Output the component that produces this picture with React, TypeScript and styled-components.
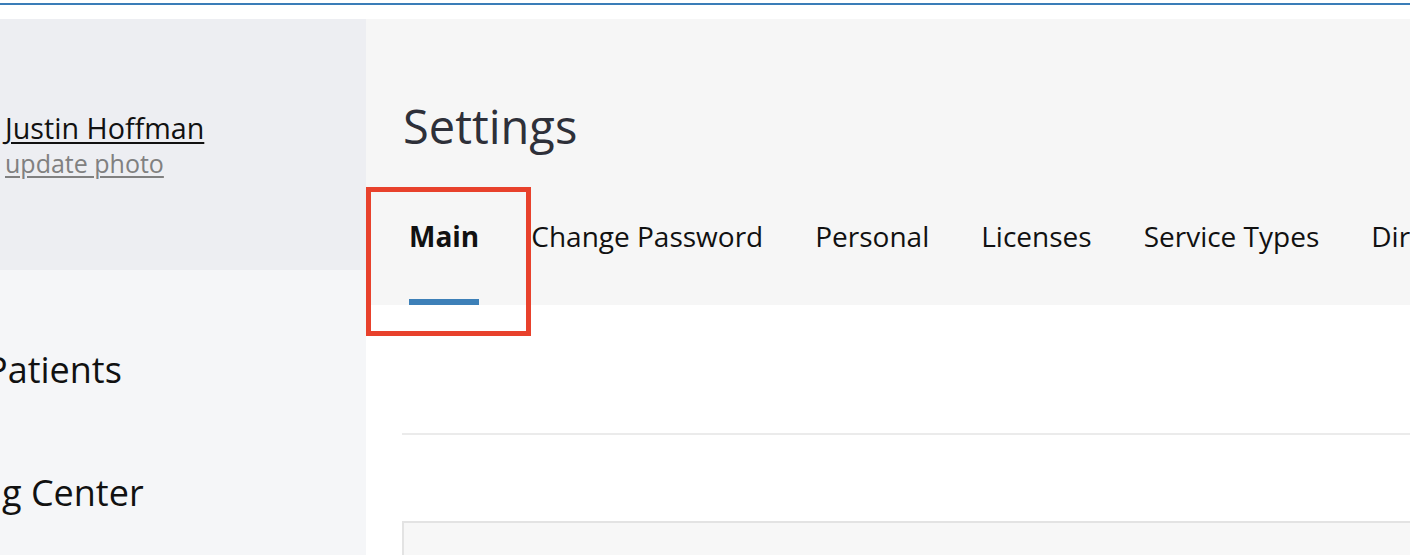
import React from "react";
import styled, { createGlobalStyle } from "styled-components";

const GlobalStyle = createGlobalStyle`
  html, body {
    margin: 0;
    padding: 0;
    background: #ffffff;
    font-family: "Open Sans", "Noto Sans", Arial, sans-serif;
    overflow: hidden;
  }
  * { box-sizing: border-box; }
`;

const Page = styled.div`
  width: 1410px;
  height: 555px;
  overflow: hidden;
  display: flex;
  flex-direction: column;
`;

const TopBar = styled.header`
  height: 19px;
  padding-top: 3px;
  flex-shrink: 0;
`;

const TopRule = styled.div`
  height: 2px;
  background: #3a7db8;
`;

const Body = styled.div`
  flex: 1;
  display: grid;
  grid-template-columns: 366px 1fr;
  min-height: 0;
`;

const Sidebar = styled.aside`
  background: #f5f6f8;
  overflow: hidden;
  display: flex;
  flex-direction: column;
`;

const Profile = styled.div`
  height: 251px;
  background: #edeef2;
  padding: 90px 0 0 5px;
  display: flex;
  flex-direction: column;
`;

const ProfileName = styled.a`
  font-size: 28.7px;
  line-height: 38px;
  color: #111111;
  text-decoration: underline;
  text-underline-offset: 3px;
  text-decoration-thickness: 2px;
`;

const ProfileLink = styled.a`
  font-size: 25px;
  line-height: 32px;
  color: #808080;
  text-decoration: underline;
  text-underline-offset: 3px;
  text-decoration-thickness: 1.5px;
`;

const NavList = styled.nav`
  display: flex;
  flex-direction: column;
  padding-top: 76px;
  gap: 75px;
`;

const NavItem = styled.div<{ $indent: number }>`
  font-size: 36px;
  line-height: 48px;
  color: #111111;
  white-space: nowrap;
  margin-left: ${(p) => p.$indent}px;
`;

const Main = styled.main`
  display: flex;
  flex-direction: column;
  min-width: 0;
  overflow: hidden;
`;

const HeaderArea = styled.section`
  background: #f6f6f6;
  height: 286px;
  padding: 81px 0 0 37px;
  display: flex;
  flex-direction: column;
  flex-shrink: 0;
`;

const Title = styled.h1`
  margin: 0;
  font-size: 47px;
  line-height: 53px;
  font-weight: 400;
  color: #2e3039;
`;

const Tabs = styled.div`
  display: flex;
  gap: 52px;
  margin: 63px 0 0 6px;
  white-space: nowrap;
`;

const Tab = styled.div<{ $active?: boolean }>`
  position: relative;
  font-size: 28px;
  line-height: 40px;
  padding-bottom: 43px;
  color: #111111;
  font-weight: ${(p) => (p.$active ? 700 : 400)};
  border-bottom: 6px solid ${(p) => (p.$active ? "#3d80b8" : "transparent")};
`;

const Highlight = styled.span`
  position: absolute;
  left: -43px;
  top: -29px;
  width: 165px;
  height: 149px;
  border: 5px solid #e8412c;
  pointer-events: none;
`;

const Content = styled.section`
  padding: 128px 0 0 36px;
  display: flex;
  flex-direction: column;
`;

const Divider = styled.hr`
  margin: 0;
  border: none;
  height: 2px;
  background: #ebebeb;
`;

const Panel = styled.div`
  margin-top: 86px;
  height: 120px;
  background: #f7f7f7;
  border: 2px solid #e3e3e3;
  border-right: none;
`;

const tabs = ["Main", "Change Password", "Personal", "Licenses", "Service Types", "Directory"];

export default function App() {
  return (
    <Page>
      <GlobalStyle />
      <TopBar>
        <TopRule />
      </TopBar>
      <Body>
        <Sidebar>
          <Profile>
            <ProfileName>Justin Hoffman</ProfileName>
            <ProfileLink>update photo</ProfileLink>
          </Profile>
          <NavList>
            <NavItem $indent={-14}>Patients</NavItem>
            <NavItem $indent={2}>g Center</NavItem>
          </NavList>
        </Sidebar>
        <Main>
          <HeaderArea>
            <Title>Settings</Title>
            <Tabs>
              {tabs.map((t, i) => (
                <Tab key={t} $active={i === 0}>
                  {t}
                  {i === 0 && <Highlight />}
                </Tab>
              ))}
            </Tabs>
          </HeaderArea>
          <Content>
            <Divider />
            <Panel />
          </Content>
        </Main>
      </Body>
    </Page>
  );
}
